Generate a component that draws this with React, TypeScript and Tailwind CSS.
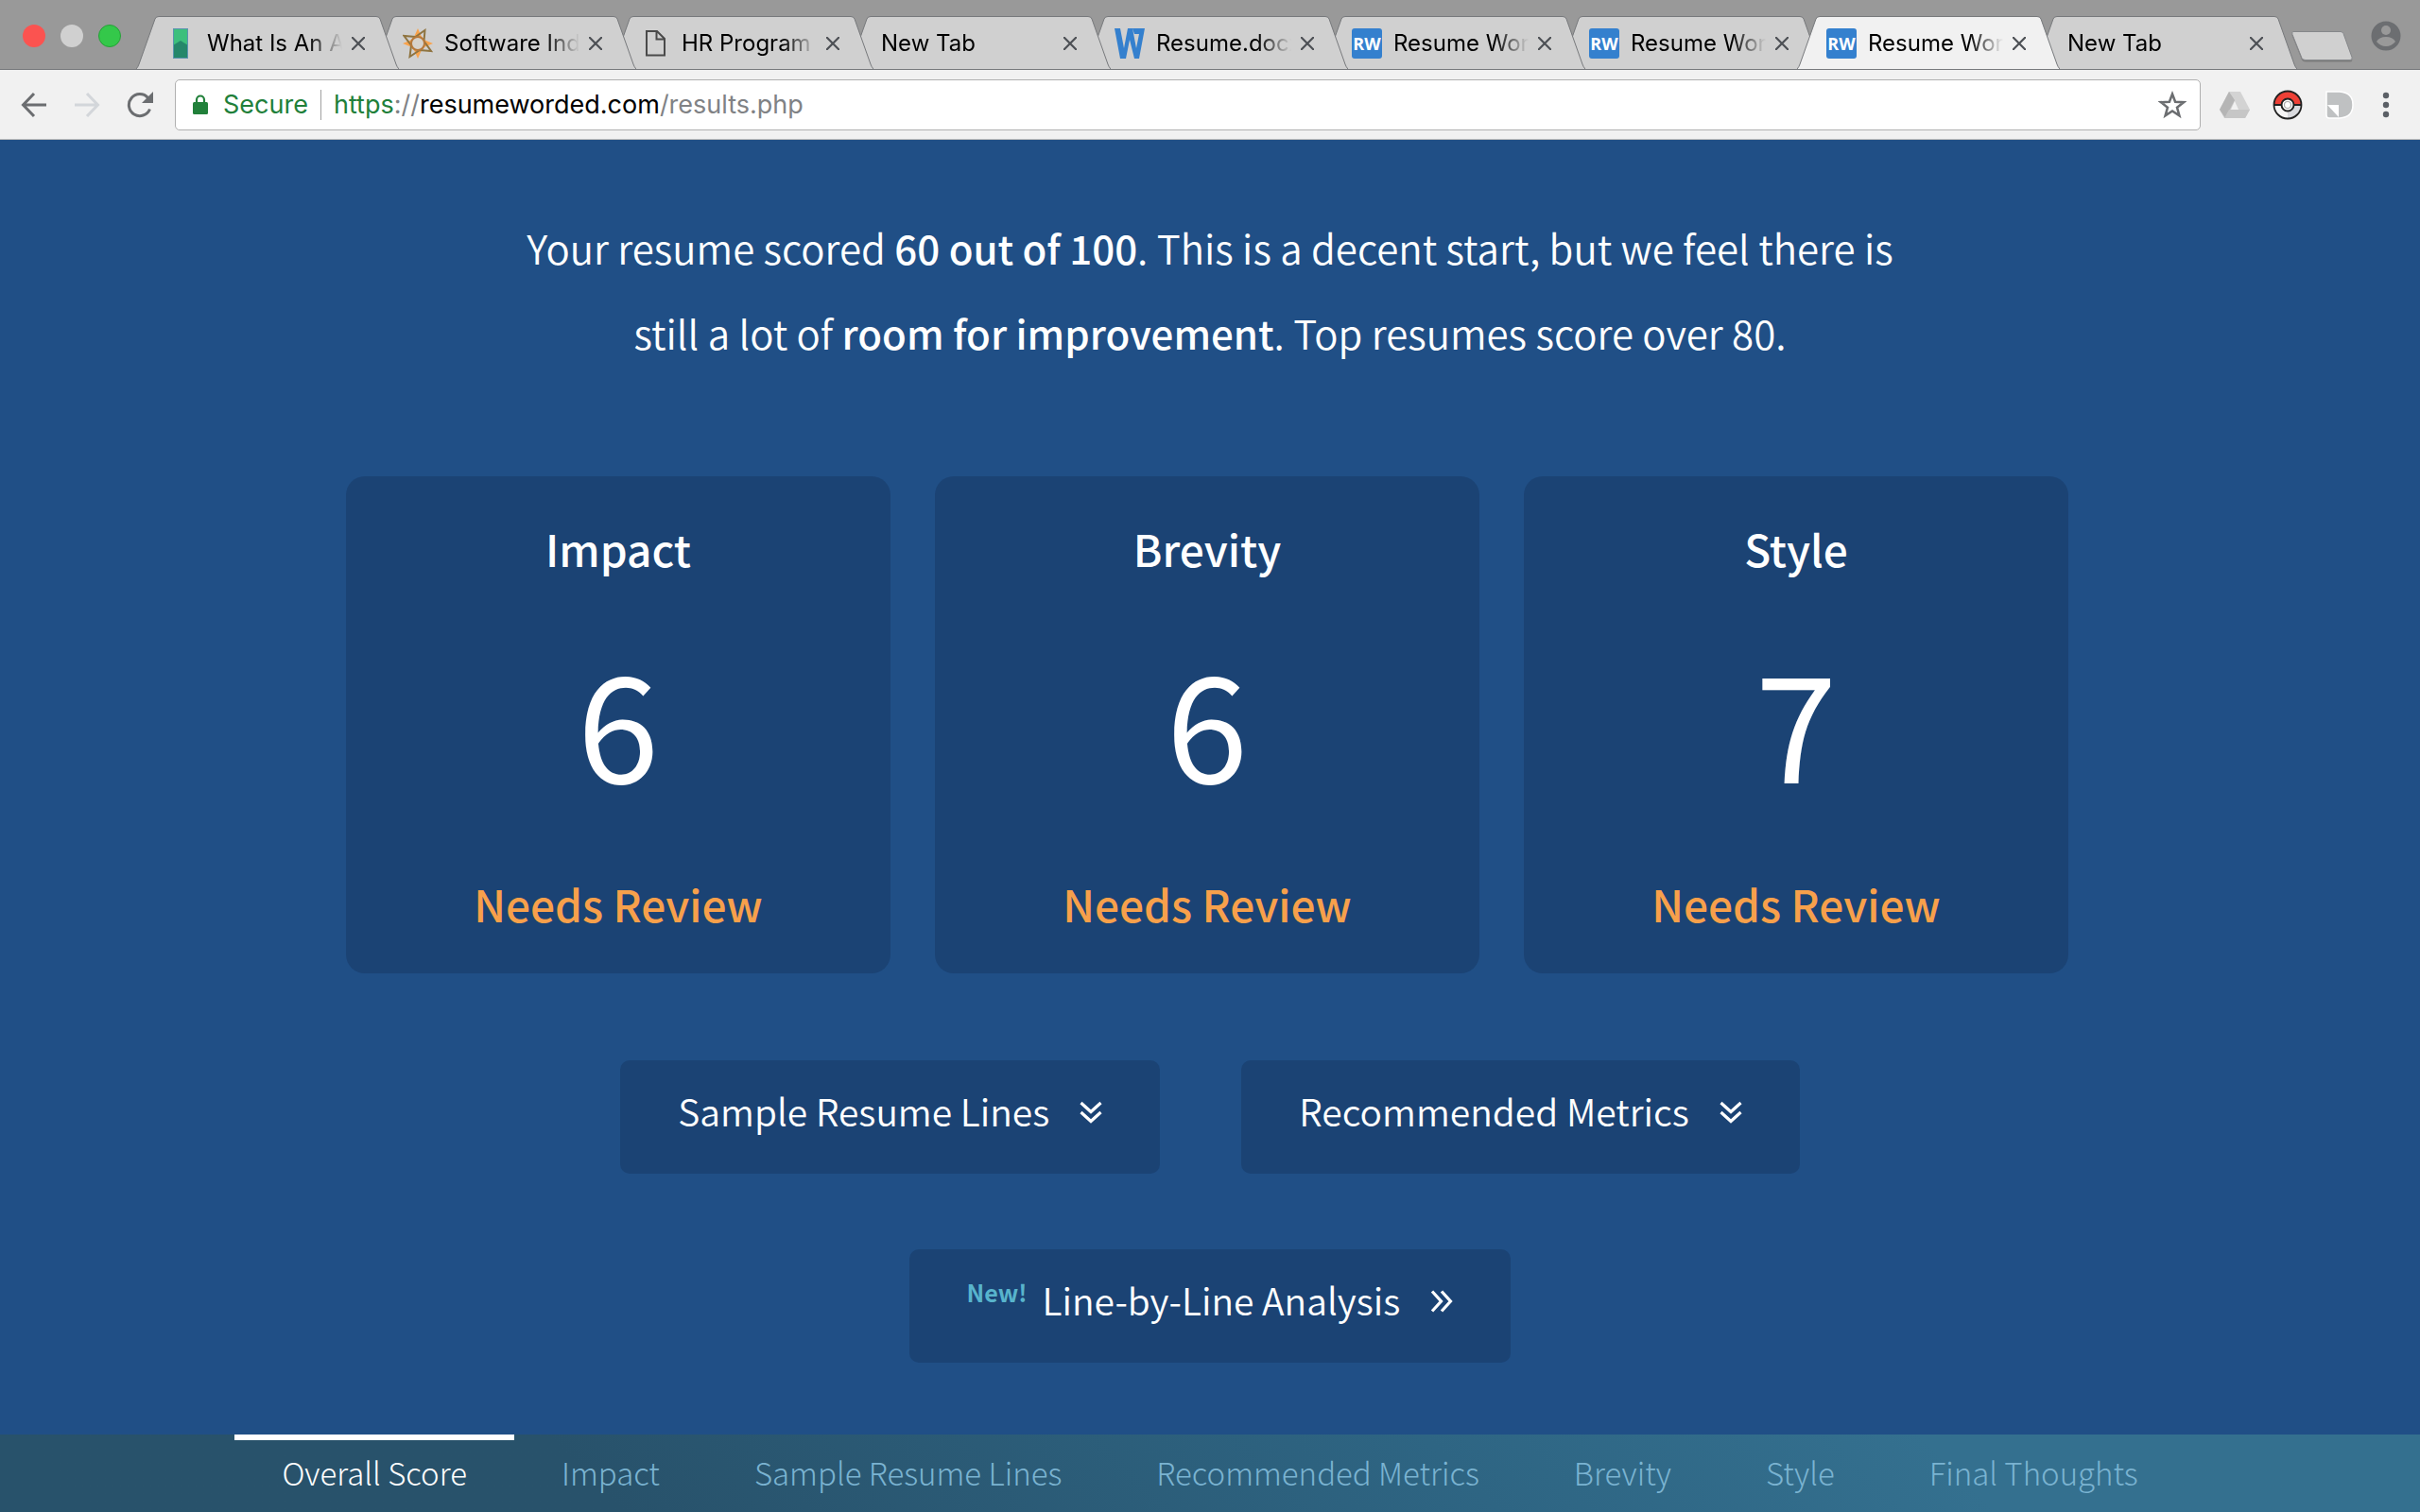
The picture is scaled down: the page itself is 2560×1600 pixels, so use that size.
import React from "react";

type IconName = "book" | "star" | "page" | "word" | "rw" | "none";

interface TabData {
  title: string;
  icon: IconName;
  active?: boolean;
}

const tabs: TabData[] = [
  { title: "What Is An A", icon: "book" },
  { title: "Software Ind", icon: "star" },
  { title: "HR Program", icon: "page" },
  { title: "New Tab", icon: "none" },
  { title: "Resume.docx", icon: "word" },
  { title: "Resume Wor", icon: "rw" },
  { title: "Resume Wor", icon: "rw" },
  { title: "Resume Wor", icon: "rw", active: true },
  { title: "New Tab", icon: "none" },
];

const scores = [
  { name: "Impact", value: 6, status: "Needs Review" },
  { name: "Brevity", value: 6, status: "Needs Review" },
  { name: "Style", value: 7, status: "Needs Review" },
];

const sections = [
  "Overall Score",
  "Impact",
  "Sample Resume Lines",
  "Recommended Metrics",
  "Brevity",
  "Style",
  "Final Thoughts",
];

function Favicon({ name }: { name: IconName }) {
  if (name === "none") return null;
  if (name === "rw") {
    return (
      <span className="flex size-8 shrink-0 items-center justify-center rounded-[3px] bg-[#3480ce] font-['Open_Sans',sans-serif] text-[18px] leading-8 font-bold text-white">
        RW
      </span>
    );
  }
  return (
    <svg viewBox="0 0 32 32" className="size-8 shrink-0" aria-hidden="true">
      {name === "book" && (
        <>
          <rect x="8" y="0" width="16" height="32" fill="#3cbf7c" />
          <path d="M8 18l8-5 8 5v14H8z" fill="#25876a" />
          <path d="M8.500 0v32M23.500 0v32M8 .5h16M8 31.500h16" stroke="#5b93b0" strokeWidth="1" />
        </>
      )}
      {name === "star" && (
        <>
          <path
            d="M16 0l3.500 8 4 4.500L32 16l-8.500 3.500-4 4.500-3.500 8-3.500-8-4-4.500L0 16l8.500-3.500 4-4.500z"
            fill="#f9a34c"
          />
          <path
            d="M23.500 2l-1 11.500L30 24l-12-1-10.500 7L9 18 1.500 8l12 1z"
            fill="none"
            stroke="#8f7440"
            strokeWidth="2"
          />
          <circle cx="16" cy="16" r="7" fill="#d6d2cc" stroke="#b5793c" strokeWidth="2" />
        </>
      )}
      {name === "page" && (
        <path
          d="M7 3h11l8 8v17.500H7zM17.500 3v8.500H26"
          fill="none"
          stroke="#4a4a4a"
          strokeWidth="2"
        />
      )}
      {name === "word" && (
        <path
          d="M0 0h6l4 21 4-21h5l4 21 3-15h-5l-2-6h13l-6 32h-5l-5-20-4 20H6z"
          fill="#3480ce"
        />
      )}
    </svg>
  );
}

function CloseIcon() {
  return (
    <svg viewBox="0 0 14 14" className="size-3.5" aria-hidden="true">
      <path d="M0 0l14 14M14 0L0 14" stroke="#4d5055" strokeWidth="2.200" />
    </svg>
  );
}

function BrowserTab({ tab, order }: { tab: TabData; order: number }) {
  const fill = tab.active ? "#f1f1f1" : "#d0d0d0";
  return (
    <div
      className="relative -mr-[27px] flex min-w-0 flex-1 items-center pt-0.5 pr-9 pl-[31px]"
      style={{ zIndex: order }}
    >
      <div className="absolute inset-0 flex" aria-hidden="true">
        <svg viewBox="0 0 27 56" preserveAspectRatio="none" className="h-full w-[27px]">
          <path d="M0 56Q2 54 3 51L20 3Q21 .5 24 .5H27V56z" fill={fill} />
          <path d="M0 56Q2 54 3 51L20 3Q21 .5 24 .5H27" fill="none" stroke="#77797c" />
        </svg>
        <div
          className={
            tab.active
              ? "flex-1 border-t border-[#77797c] bg-[#f1f1f1]"
              : "flex-1 border-t border-[#77797c] bg-[#d0d0d0]"
          }
        />
        <svg viewBox="0 0 27 56" preserveAspectRatio="none" className="h-full w-[27px]">
          <path d="M27 56Q25 54 24 51L7 3Q6 .5 3 .5H0V56z" fill={fill} />
          <path d="M27 56Q25 54 24 51L7 3Q6 .5 3 .5H0" fill="none" stroke="#77797c" />
        </svg>
      </div>
      <a
        href="#tab"
        className={
          tab.icon === "none"
            ? "relative min-w-0 flex-1 pl-1 text-[24px] leading-8 text-black"
            : "relative flex min-w-0 flex-1 items-center gap-3 text-[24px] leading-8 text-black"
        }
      >
        <Favicon name={tab.icon} />
        <span className="block min-w-0 flex-1 mask-r-from-[calc(100%-36px)] mask-r-to-100% whitespace-nowrap">
          {tab.title}
        </span>
      </a>
      <button type="button" aria-label="Close tab" className="relative ml-2.5 shrink-0">
        <CloseIcon />
      </button>
    </div>
  );
}

function TabStrip() {
  return (
    <div className="flex h-[73px] bg-[#999999] pt-[17px]">
      <div className="flex w-[144px] shrink-0 gap-4 pt-[9px] pl-6">
        <button type="button" aria-label="Close window" className="size-6 rounded-full bg-[#fb5350]" />
        <button type="button" aria-label="Minimize window" className="size-6 rounded-full bg-[#d0d0d0]" />
        <button type="button" aria-label="Zoom window" className="size-6 rounded-full border border-[#27a038] bg-[#34c84a]" />
      </div>
      <div className="flex min-w-0 flex-1 pr-[27px]">
        {tabs.map((tab, i) => (
          <BrowserTab key={i} tab={tab} order={tab.active ? 20 : tabs.length - i} />
        ))}
      </div>
      <div className="flex w-[130px] shrink-0 items-start justify-between pr-5">
        <button type="button" aria-label="New tab" className="-ml-2 pt-[15px]">
          <svg viewBox="0 0 68 36" className="h-9 w-[68px]" aria-hidden="true">
            <path d="M4 3.500h50q2 0 3 2l9 25q1 3-2 3H17q-3 0-4-2L3 6.500q-1-3 1-3z" fill="#7d7d7d" />
            <path d="M4 1.500h50q2 0 3 2l9 25q1 3-2 3H17q-3 0-4-2L3 4.500q-1-3 1-3z" fill="#d0d0d0" stroke="#85878a" />
          </svg>
        </button>
        <button type="button" aria-label="Profile" className="pt-[5px]">
          <svg viewBox="0 0 32 32" className="size-8" aria-hidden="true">
            <circle cx="16" cy="16" r="15.500" fill="#6c6e71" />
            <circle cx="16" cy="10" r="5" fill="#999999" />
            <path d="M6 22q3-5 10-5t10 5q-4 5-10 5t-10-5z" fill="#999999" />
          </svg>
        </button>
      </div>
    </div>
  );
}

function Toolbar() {
  return (
    <div className="flex h-[75px] items-center border-t border-b border-t-[#77797c] border-b-[#b9b9b9] bg-[#f1f1f1] pr-8 pl-[22px]">
      <div className="flex shrink-0 items-center gap-7 pr-[23px]">
        <button type="button" aria-label="Back">
          <svg viewBox="0 0 28 28" className="size-7" aria-hidden="true">
            <path d="M27 14H3M14 2L2.500 14 14 26" fill="none" stroke="#6b6d70" strokeWidth="3" />
          </svg>
        </button>
        <button type="button" aria-label="Forward">
          <svg viewBox="0 0 28 28" className="size-7" aria-hidden="true">
            <path d="M1 14h24M14 2l11.500 12L14 26" fill="none" stroke="#d3d6da" strokeWidth="3" />
          </svg>
        </button>
        <button type="button" aria-label="Reload">
          <svg viewBox="0 0 28 28" className="size-7" aria-hidden="true">
            <path d="M24.500 18.500A11.500 11.500 0 1 1 22.500 6.500" fill="none" stroke="#6b6d70" strokeWidth="3" />
            <path d="M28 0v12H16z" fill="#6b6d70" />
          </svg>
        </button>
      </div>
      <div className="flex h-[54px] min-w-0 flex-1 items-center rounded-[5px] border border-[#b0b0b0] bg-white pr-3.5 pl-[18px]">
        <svg viewBox="0 0 16 22" className="h-[22px] w-4 shrink-0" aria-hidden="true">
          <rect x="0" y="8" width="16" height="13" rx="1.500" fill="#21803a" />
          <path d="M4 9V5.500a4 4 0 0 1 8 0V9" fill="none" stroke="#21803a" strokeWidth="2.200" />
        </svg>
        <span className="pl-4 text-[27px] leading-8 text-[#21803a]">Secure</span>
        <span className="mx-[13px] h-8 w-px bg-[#a0a0a0]" />
        <div
          role="textbox"
          aria-label="Address"
          tabIndex={0}
          className="min-w-0 flex-1 text-[27px] leading-8 whitespace-nowrap text-[#808285]"
        >
          <span className="text-[#21803a]">https</span>://<span className="text-black">resumeworded.com</span>/results.php
        </div>
        <button type="button" aria-label="Bookmark this page">
          <svg viewBox="0 0 30 30" className="size-[30px]" aria-hidden="true">
            <path
              d="M15 3.500l3.100 8.300 8.900.4-7 5.500 2.400 8.600L15 21.400l-7.400 4.900L10 17.700 3 12.200l8.900-.4z"
              fill="none"
              stroke="#6b6d70"
              strokeWidth="2.500"
            />
          </svg>
        </button>
      </div>
      <div className="flex shrink-0 items-center gap-6 pl-5">
        <button type="button" aria-label="Drive">
          <svg viewBox="0 0 32 30" className="h-[30px] w-8" aria-hidden="true">
            <path d="M10 1h12l10 19-5 9H5l-5-9z" fill="#d3d3d3" />
            <path d="M10 1l6 9L6 29l-6-9z" fill="#b5b5b5" />
            <path d="M10 20h22l-5 9H5z" fill="#c6c6c6" />
            <path d="M12 20h8l-4-9z" fill="#f1f1f1" />
          </svg>
        </button>
        <button type="button" aria-label="Pokeball extension">
          <svg viewBox="0 0 32 32" className="size-8" aria-hidden="true">
            <circle cx="16" cy="16" r="14.500" fill="#f5f5f5" />
            <path d="M1.500 16a14.500 14.500 0 0 1 29 0z" fill="#ee4036" />
            <path d="M20 16h10.500A14.500 14.500 0 0 1 16 30.500V23q5-1 6-7z" fill="#d9dade" />
            <path d="M1.500 16h29" stroke="#222" strokeWidth="2" />
            <circle cx="16" cy="16" r="14.500" fill="none" stroke="#222" strokeWidth="1.800" />
            <circle cx="16" cy="16" r="6.500" fill="#fff" stroke="#222" strokeWidth="2" />
            <circle cx="16" cy="16" r="3.500" fill="#fff" stroke="#aaa" strokeWidth="1.200" />
          </svg>
        </button>
        <button type="button" aria-label="Page extension">
          <svg viewBox="0 0 30 32" className="h-8 w-[30px]" aria-hidden="true">
            <path
              d="M1 2h14q14 1 14 14T15 30H4q-3 0-3-3z"
              fill="#bfc1c2"
              stroke="#fff"
              strokeWidth="1.500"
            />
            <path d="M2 16h12v13z" fill="#fff" />
          </svg>
        </button>
        <button type="button" aria-label="Menu" className="pl-1.5">
          <svg viewBox="0 0 8 34" className="h-[34px] w-2" aria-hidden="true">
            <g fill="#5b6066">
              <circle cx="4" cy="7" r="3.200" />
              <circle cx="4" cy="17" r="3.200" />
              <circle cx="4" cy="27" r="3.200" />
            </g>
          </svg>
        </button>
      </div>
    </div>
  );
}

function Chevrons({ right = false }: { right?: boolean }) {
  return (
    <svg viewBox="0 0 24 24" className="size-6" aria-hidden="true">
      <path
        d={right ? "M2 1.500l9.500 10.500L2 22.500M12 1.500L21.500 12 12 22.500" : "M1.500 2L12 11.500 22.500 2M1.500 12L12 21.500 22.500 12"}
        fill="none"
        stroke="#fff"
        strokeWidth="3.200"
      />
    </svg>
  );
}

const actionClass =
  "flex items-start rounded-[10px] bg-[#1b4374] px-[61px] pt-[33px] pb-[47px] text-[39px] leading-10 font-[350] text-white";

export default function App() {
  return (
    <div className="flex min-h-screen flex-col bg-[#204f86] font-['Inter',sans-serif]">
      <header>
        <TabStrip />
        <Toolbar />
      </header>
      <main className="flex flex-1 flex-col font-['Noto_Sans_CJK_SC',sans-serif] text-white">
        <p className="mx-auto max-w-[1500px] pt-[69px] text-center text-[42px] leading-[90px] font-[350]">
          Your resume scored <strong className="font-medium">60 out of 100</strong>. This is a decent start, but we feel there is
          <br />
          still a lot of <strong className="font-medium">room for improvement</strong>. Top resumes score over 80.
        </p>
        <div className="mt-[107px] flex justify-center gap-[47px] pr-1.5">
          {scores.map((s) => (
            <section
              key={s.name}
              className="flex w-[576px] flex-col rounded-[20px] bg-[#1b4374] pt-[46px] pb-11 text-center"
            >
              <h2 className="text-[46px] leading-[60px] font-medium">{s.name}</h2>
              <p className="mt-[71px] text-[156px] leading-[160px] font-normal">{s.value}</p>
              <p className="mt-[85px] text-[46px] leading-[60px] font-medium text-[#f7a04b]">{s.status}</p>
            </section>
          ))}
        </div>
        <div className="mt-[92px] flex justify-center gap-[86px]">
          <button type="button" className={actionClass}>
            Sample Resume Lines
            <span className="mt-2.5 ml-8">
              <Chevrons />
            </span>
          </button>
          <button type="button" className={actionClass}>
            Recommended Metrics
            <span className="mt-2.5 ml-8">
              <Chevrons />
            </span>
          </button>
        </div>
        <div className="mt-20 flex justify-center pb-[76px]">
          <button type="button" className={actionClass}>
            <span className="mr-4 text-[25px] leading-6 font-bold text-[#58b4cc]">New!</span>
            Line-by-Line Analysis
            <span className="mt-2.5 ml-8">
              <Chevrons right />
            </span>
          </button>
        </div>
        <nav className="flex flex-1 justify-center bg-linear-45 from-[#28526b] from-25% via-[#2e6583] via-60% to-[#34708f] to-80%">
          {sections.map((name, i) => (
            <a
              key={name}
              href="#section"
              className={
                i === 0
                  ? "border-t-6 border-white px-[50px] pt-3.5 text-[33px] leading-10 font-light text-white"
                  : "border-t-6 border-transparent px-[50px] pt-3.5 text-[33px] leading-10 font-light text-[#7ab3d1]"
              }
            >
              {name}
            </a>
          ))}
        </nav>
      </main>
    </div>
  );
}
